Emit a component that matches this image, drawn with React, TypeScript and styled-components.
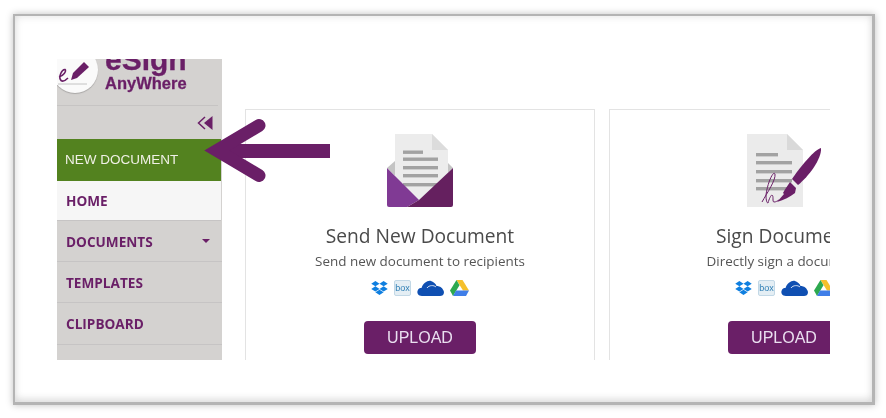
import React from 'react'
import styled, { createGlobalStyle } from 'styled-components'
import { FaDropbox } from 'react-icons/fa'

const purple = '#6a1f67'

const GlobalStyle = createGlobalStyle`
  html, body {
    margin: 0;
    padding: 0;
    width: 886px;
    height: 418px;
    overflow: hidden;
    background: #fff;
    font-family: "Open Sans", sans-serif;
  }
`

const Frame = styled.div`
  position: relative;
  box-sizing: border-box;
  width: 862px;
  height: 391px;
  margin: 14px 0 0 13px;
  padding: 43px 0 0 42px;
  background: #fff;
  border: 2px solid #b4b4b4;
  border-bottom-width: 3px;
  border-right-width: 3px;
  box-shadow: 0 0 7px rgba(0, 0, 0, 0.25), inset 0 0 8px rgba(0, 0, 0, 0.12),
    inset 0 -5px 6px rgba(0, 0, 0, 0.06);
`

const Screen = styled.div`
  display: flex;
  width: 773px;
  height: 301px;
  overflow: hidden;
  background: #fff;
  filter: blur(0.35px);
`

const Sidebar = styled.nav`
  display: flex;
  flex-direction: column;
  flex: 0 0 165px;
  background: #d4d2d0;
`

const Brand = styled.div`
  display: flex;
  box-sizing: border-box;
  height: 47px;
  margin-right: 4px;
  overflow: hidden;
  border-bottom: 1px solid #c6c4c3;
`

const BrandBadge = styled.div`
  flex: 0 0 46px;
  height: 46px;
  margin: -12px 0 0 -5px;
  border-radius: 50%;
  background: #fafafa;
  box-shadow: 0 1px 1px #a9a7a6;

  svg {
    display: block;
    width: 46px;
    height: 46px;
  }
`

const BrandText = styled.div`
  display: flex;
  flex-direction: column;
  margin: -16px 0 0 7px;
  color: ${purple};
  font-family: "Liberation Sans", sans-serif;
  font-weight: 700;
  -webkit-text-stroke: 0.3px ${purple};
`

const BrandName = styled.span`
  height: 31px;
  font-size: 30px;
  line-height: 34px;
`

const BrandSub = styled.span`
  font-size: 16.5px;
  line-height: 18px;
`

const CollapseRow = styled.div`
  display: flex;
  align-items: center;
  justify-content: flex-end;
  height: 33px;
  padding-right: 9px;
  box-sizing: border-box;

  svg {
    width: 16px;
    height: 16px;
  }
`

const NewDocument = styled.div`
  display: flex;
  align-items: center;
  box-sizing: border-box;
  height: 42px;
  margin-right: 1px;
  padding: 0 0 2px 8px;
  background: #53821f;
  color: #f0f0e6;
  font-family: "Liberation Sans", sans-serif;
  font-size: 13.5px;
`

const NavItem = styled.div<{ $active?: boolean; $height: number }>`
  display: flex;
  align-items: center;
  justify-content: space-between;
  box-sizing: border-box;
  height: ${props => props.$height}px;
  padding: 0 12px 0 9px;
  margin-right: ${props => (props.$active ? '1px' : '0')};
  background: ${props => (props.$active ? '#f6f6f6' : 'transparent')};
  border-bottom: 1px solid #c6c4c4;
  color: ${purple};
  font-size: 13.6px;
  font-weight: 700;
`

const Caret = styled.span`
  width: 0;
  height: 0;
  border-left: 4px solid transparent;
  border-right: 4px solid transparent;
  border-top: 4px solid ${purple};
`

const Main = styled.main`
  display: flex;
  flex: 1;
  gap: 14px;
  padding: 50px 0 0 23px;
`

const Card = styled.section`
  display: flex;
  flex: 0 0 350px;
  flex-direction: column;
  align-items: center;
  box-sizing: border-box;
  height: 300px;
  padding-top: 23px;
  border: 1px solid #e3e3e3;
`

const Art = styled.svg`
  display: block;
  width: 76px;
  height: 75px;
`

const Title = styled.h2`
  margin: 15px 0 0;
  color: #4a4a4a;
  font-size: 19.2px;
  font-weight: 400;
  line-height: 26px;
  white-space: nowrap;
`

const Subtitle = styled.p`
  margin: 3px 0 0;
  color: #555;
  font-size: 13.45px;
  line-height: 19px;
  white-space: nowrap;
`

const Sources = styled.div`
  display: flex;
  align-items: center;
  gap: 6px;
  height: 17px;
  margin-top: 8px;
`

const DropboxIcon = styled(FaDropbox)`
  width: 17px;
  height: 16px;
  color: #0f7fe0;
`

const BoxTile = styled.span`
  display: flex;
  align-items: center;
  justify-content: center;
  box-sizing: border-box;
  width: 17px;
  height: 16px;
  border: 1px solid #c2d8e6;
  border-radius: 2px;
  background: #e4eef4;
  color: #2f7fb5;
  font-family: "Liberation Sans", sans-serif;
  font-size: 9px;
`

const SourceSvg = styled.svg<{ $width: number }>`
  display: block;
  width: ${props => props.$width}px;
  height: 16px;
`

const UploadButton = styled.button`
  width: 112px;
  height: 33px;
  margin-top: 25px;
  padding: 1px 0 0;
  flex: none;
  border: 0;
  border-radius: 4px;
  background: ${purple};
  color: #eadff0;
  font-family: "Liberation Sans", sans-serif;
  font-size: 16px;
`

const ArrowOverlay = styled.svg`
  position: absolute;
  left: 189px;
  top: 105px;
  width: 130px;
  height: 70px;
  overflow: visible;
`

const SendArt = () => (
  <Art viewBox="0 0 76 75">
    <polygon points="5,35 13,28 66,30 71,35 38,67" fill="#c4c4c4" />
    <polygon points="13,1 50,1 66,17 66,46 38,70 13,46" fill="#ececec" />
    <polygon points="50,1 66,17 50,17" fill="#dcdcdc" />
    <rect x="21" y="17.5" width="20" height="3.4" fill="#a2a2a2" />
    <rect x="21" y="24.5" width="35" height="3.4" fill="#a2a2a2" />
    <rect x="21" y="33" width="35" height="3.4" fill="#a2a2a2" />
    <rect x="21" y="41" width="35" height="3.4" fill="#a2a2a2" />
    <rect x="21" y="50" width="35" height="3.4" fill="#a2a2a2" />
    <path d="M5 35 L37 67 L25 74 H7 Q5 74 5 72 Z" fill="#803a94" />
    <path d="M71 35 L37 67 L25 74 H69 Q71 74 71 72 Z" fill="#65205f" />
  </Art>
)

const SignArt = () => (
  <Art viewBox="0 0 76 75">
    <polygon points="1,1 41,1 57,17 57,74 1,74" fill="#ebebeb" />
    <polygon points="41,1 57,17 41,17" fill="#d9d9d9" />
    <rect x="10" y="20" width="22" height="3.4" fill="#a2a2a2" />
    <rect x="10" y="28" width="36" height="3.4" fill="#a2a2a2" />
    <rect x="10" y="37" width="36" height="3.4" fill="#a2a2a2" />
    <rect x="10" y="46" width="36" height="3.4" fill="#a2a2a2" />
    <rect x="10" y="54" width="36" height="3.4" fill="#a2a2a2" />
    <path d="M75 15 C69 16 54 34 46 46 L52 52 C62 44 76 26 75 15 Z" fill={purple} />
    <path d="M44 49 L50 55 L49 60 C44 64 38 67 31 69 L38 61 L37 60 C39 56 42 52 44 49 Z" fill={purple} />
    <path
      d="M16 69 C21 60 30 47 29 41 C27 37 21 52 20 62 C20 68 21 70 22 70 C23 66 25 62 26 62 C28 63 26 69 28 69 C30 69 31 68 33 67"
      fill="none"
      stroke={purple}
      strokeWidth="1"
    />
  </Art>
)

const OneDrive = () => (
  <SourceSvg $width={27} viewBox="0 0 27 16">
    <path d="M5 16 C1 16 0 13 0.5 11 C1 8.5 3 8 4.5 8 C6 3 11 0 14 1 C17 2 19 4 19.5 6 C23 6 26 8 27 12 C27 15 25 16 23 16 Z" fill="#0f4fb2" />
    <path d="M10 8 C12 5 17 5 19 7" fill="none" stroke="#fff" strokeWidth="0.8" />
  </SourceSvg>
)

const Drive = () => (
  <SourceSvg $width={19} viewBox="0 0 19 16">
    <polygon points="6.5,0 12.5,0 19,10.5 13,10.5" fill="#f5c02c" />
    <polygon points="6.5,0 9.5,5.2 3,16 0,10.5" fill="#2da94f" />
    <polygon points="6,10.5 19,10.5 16,16 3,16" fill="#3f7ee8" />
  </SourceSvg>
)

const CloudSources = () => (
  <Sources>
    <DropboxIcon />
    <BoxTile>box</BoxTile>
    <OneDrive />
    <Drive />
  </Sources>
)

const cards = [
  { title: 'Send New Document', text: 'Send new document to recipients', art: <SendArt /> },
  { title: 'Sign Document', text: 'Directly sign a document', art: <SignArt /> },
]

const App: React.FC = () => (
  <>
    <GlobalStyle />
    <Frame>
      <Screen>
        <Sidebar>
          <Brand>
            <BrandBadge>
              <svg viewBox="0 0 46 46">
                <path d="M32 15 L37 20 L25 31 L19 33 L21 26 Z" fill={purple} />
                <path d="M7 30 C11 29 15 24 13 22.5 C10 22 6 30 9 33.5 C11 35 14 33 16 31" fill="none" stroke={purple} strokeWidth="1.6" />
                <path d="M6 37 H35" stroke="#b5b5b5" strokeWidth="0.8" />
              </svg>
            </BrandBadge>
            <BrandText>
              <BrandName>eSign</BrandName>
              <BrandSub>AnyWhere</BrandSub>
            </BrandText>
          </Brand>
          <CollapseRow>
            <svg viewBox="0 0 16 16">
              <path d="M8 2 L1.5 8 L8 14" fill="none" stroke={purple} strokeWidth="1.5" />
              <path d="M15.5 1 V15 L7 8 Z" fill={purple} />
            </svg>
          </CollapseRow>
          <NewDocument>NEW DOCUMENT</NewDocument>
          <NavItem $active $height={40}>HOME</NavItem>
          <NavItem $height={41}>
            DOCUMENTS
            <Caret />
          </NavItem>
          <NavItem $height={41}>TEMPLATES</NavItem>
          <NavItem $height={42}>CLIPBOARD</NavItem>
        </Sidebar>
        <Main>
          {cards.map(card => (
            <Card key={card.title}>
              {card.art}
              <Title>{card.title}</Title>
              <Subtitle>{card.text}</Subtitle>
              <CloudSources />
              <UploadButton>UPLOAD</UploadButton>
            </Card>
          ))}
        </Main>
      </Screen>
      <ArrowOverlay viewBox="0 0 130 70">
        <rect x="20" y="23" width="106" height="14" fill={purple} />
        <path d="M55 4.5 L13 29.5 L55 54.5" fill="none" stroke={purple} strokeWidth="13" strokeLinecap="round" strokeLinejoin="miter" />
      </ArrowOverlay>
    </Frame>
  </>
)

export default App
